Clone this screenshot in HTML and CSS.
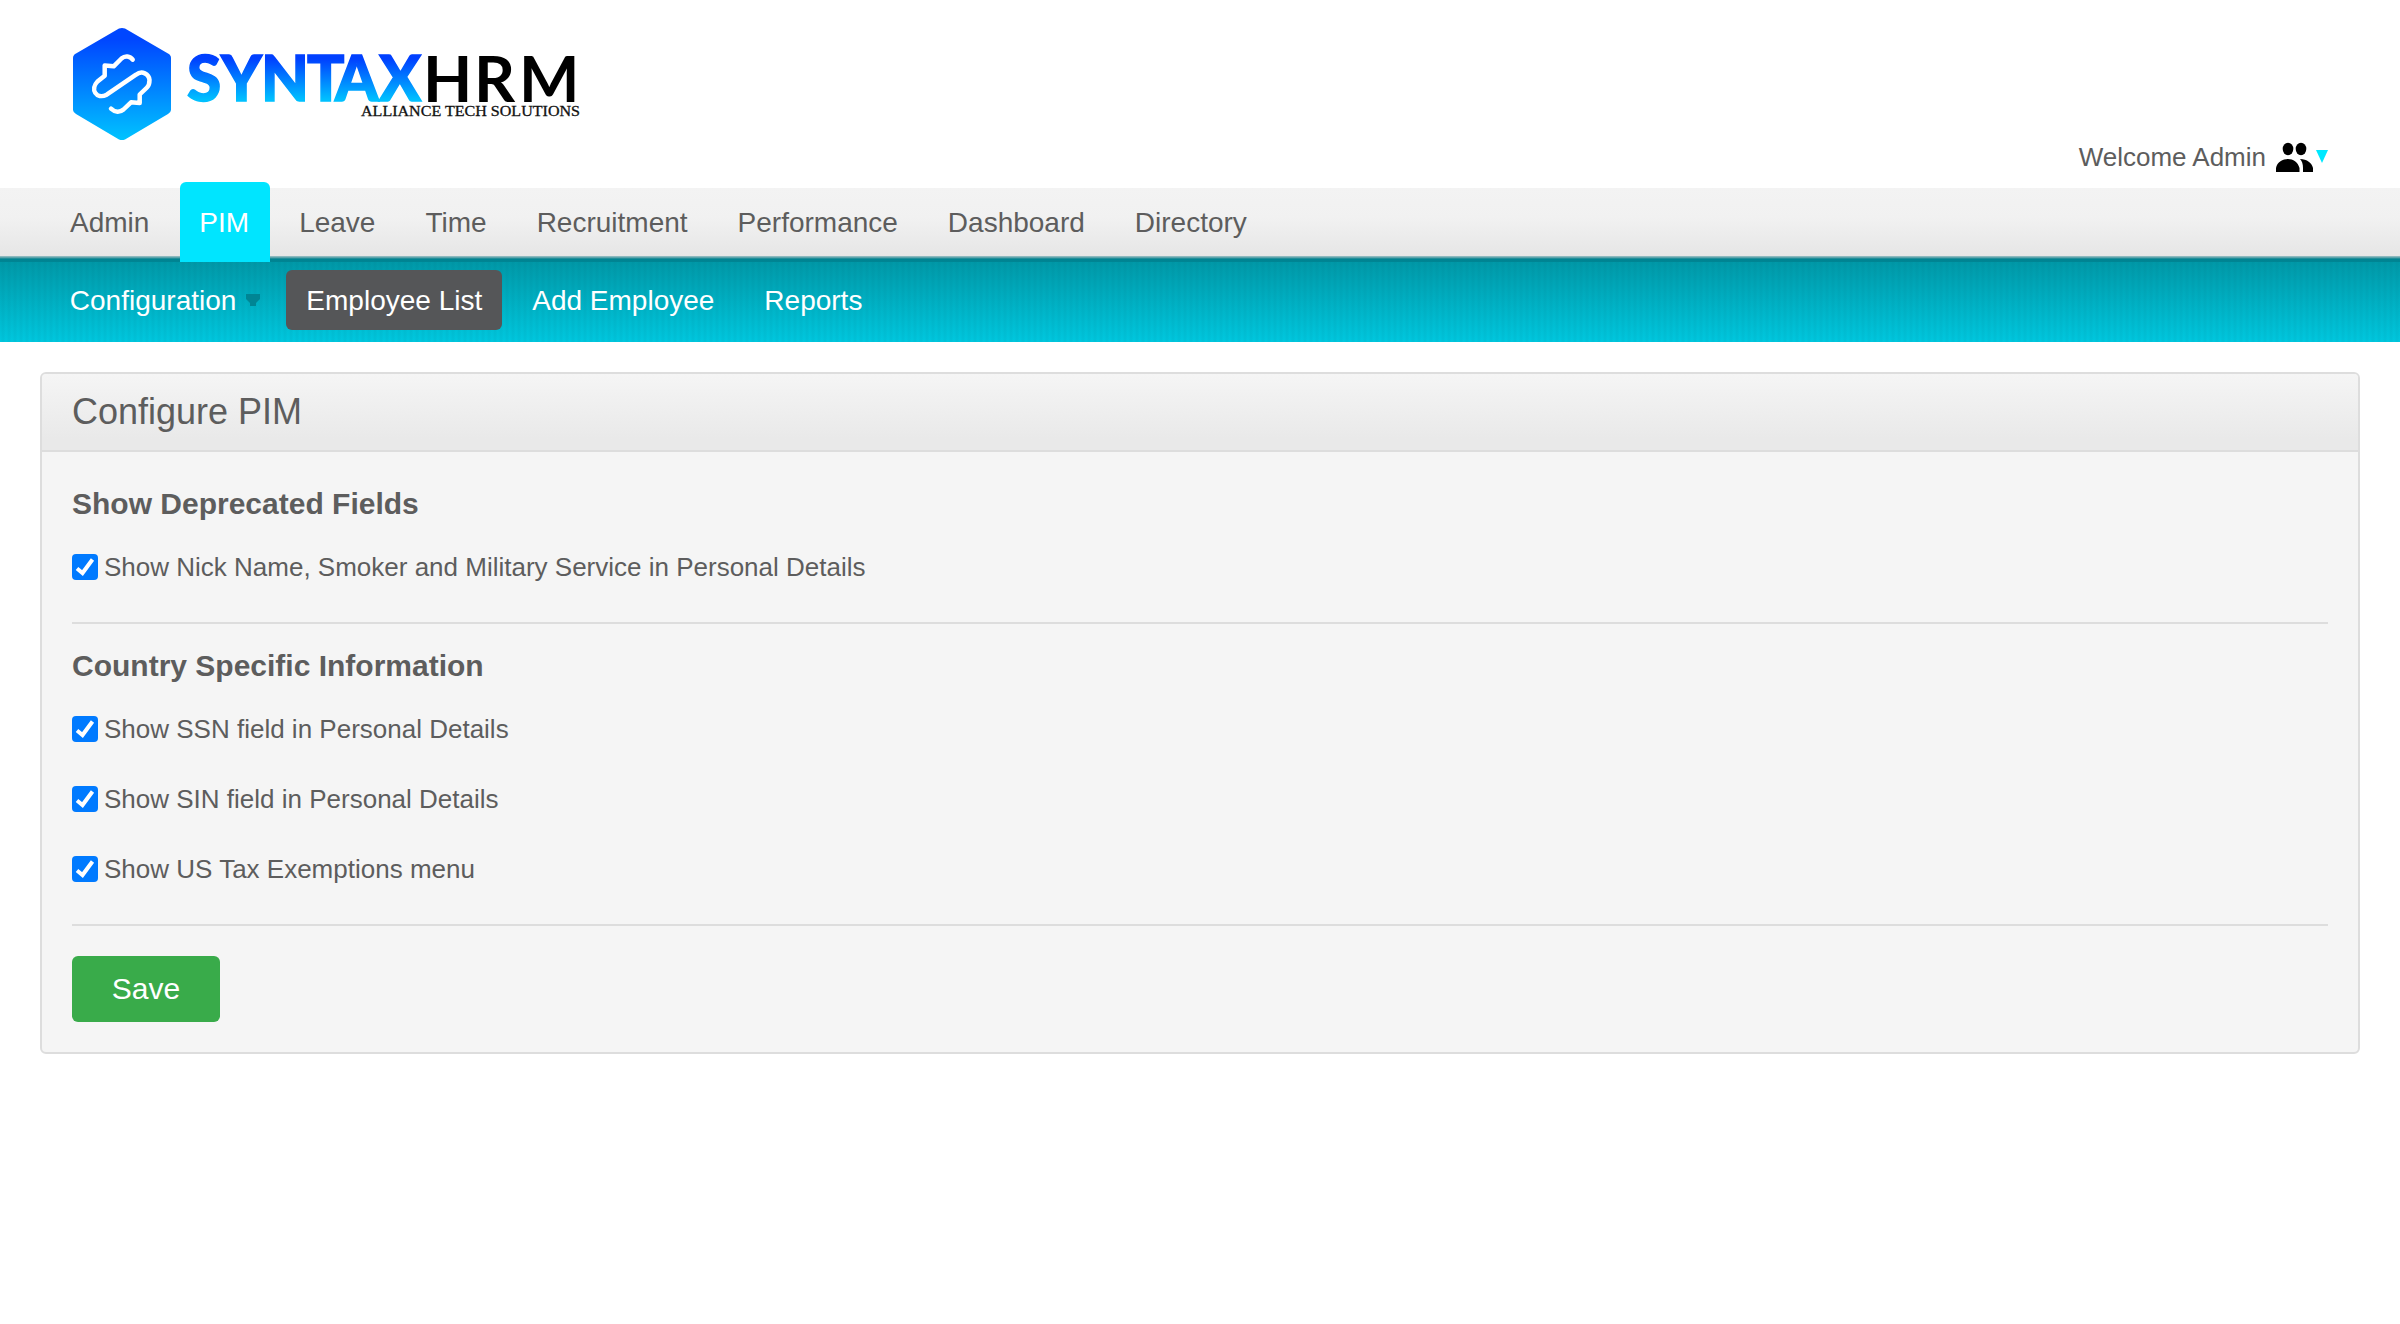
FILE: index.html
```html
<!DOCTYPE html>
<html lang="en">
<head>
<meta charset="utf-8">
<title>Configure PIM</title>
<link rel="stylesheet" href="styles.css">
</head>
<body>
<header class="branding">
  <svg class="logo" width="520" height="130" viewBox="0 0 520 130" role="img" aria-label="SyntaxHRM">
    <defs>
      <linearGradient id="hex" x1="0" y1="0" x2="0" y2="1"><stop offset="0.1" stop-color="#0046ff"/><stop offset="1" stop-color="#00c3ff"/></linearGradient>
      <linearGradient id="word" gradientUnits="userSpaceOnUse" x1="0" y1="45" x2="0" y2="92"><stop offset="0.08" stop-color="#0040ff"/><stop offset="0.95" stop-color="#00c0ff"/></linearGradient>
    </defs>
    <path fill="url(#hex)" d="M49 18.500Q52 17.500 55 18.500L98 43.500Q101 45 101 48V100Q101 102 98 104L55 129.500Q52 130.500 49 129.500L6 104Q3 102 3 100V48Q3 45 6 43.500Z"/>
    <path class="knot" d="M62.700 49.700C60 46 55 45.500 51.500 48.500L43.700 56.300L34.700 55.500V65.700L27.500 71.500C20 79 26 90 36.700 84.700L66 64.700C72 60 79 64 79.500 70C79.500 73 79 75.500 77 77.500L69.700 84.500V93L61 92.300L53.500 99.500C50 102.500 45 102.500 41 98.700"/>
    <text class="syntax" x="117 151 191 237 265 309" y="91">SYNTAX</text>
    <text class="hrm" x="353 404 449" y="92">HRM</text>
    <text class="tagline" x="291" y="106" textLength="219" lengthAdjust="spacingAndGlyphs">ALLIANCE TECH SOLUTIONS</text>
  </svg>
  <div class="account">
    <span>Welcome Admin</span>
    <svg class="people" width="38" height="32" viewBox="0 0 38 32"><ellipse cx="12" cy="7" rx="5.300" ry="6.200"/><ellipse cx="25" cy="7" rx="5.300" ry="6.200"/><path d="M0 30V26C1 20 7 17 12 17S22 20 23.500 26V30ZM24 17C31 17 36 21 37 26V30H27V26C27 22 26 19 24 17Z"/></svg>
    <svg class="caret" width="12" height="14" viewBox="0 0 12 14"><path d="M0 0H12L6 13Z"/></svg>
  </div>
</header>
<nav class="menu">
  <a>Admin</a><a class="current">PIM</a><a>Leave</a><a>Time</a><a>Recruitment</a><a>Performance</a><a>Dashboard</a><a>Directory</a>
</nav>
<nav class="submenu">
  <a class="has-arrow">Configuration<svg width="14" height="13" viewBox="0 0 14 13"><path d="M0 0H14V5L10 9V12H4V9L0 5Z"/></svg></a><a class="selected">Employee List</a><a>Add Employee</a><a>Reports</a>
</nav>
<main class="box">
  <h1>Configure PIM</h1>
  <form class="inner">
    <section>
      <h2>Show Deprecated Fields</h2>
      <label><svg class="check" viewBox="0 0 26 26"><path d="M5 14.500L10.500 19L20.500 5.500"/></svg>Show Nick Name, Smoker and Military Service in Personal Details</label>
    </section>
    <section>
      <h2>Country Specific Information</h2>
      <label><svg class="check" viewBox="0 0 26 26"><path d="M5 14.500L10.500 19L20.500 5.500"/></svg>Show SSN field in Personal Details</label>
      <label><svg class="check" viewBox="0 0 26 26"><path d="M5 14.500L10.500 19L20.500 5.500"/></svg>Show SIN field in Personal Details</label>
      <label><svg class="check" viewBox="0 0 26 26"><path d="M5 14.500L10.500 19L20.500 5.500"/></svg>Show US Tax Exemptions menu</label>
    </section>
    <button type="button">Save</button>
  </form>
</main>
</body>
</html>
```
FILE: styles.css
```css
* { box-sizing: border-box; }
body { margin: 0; background: #fff; color: #5d5d5d; font-family: "Liberation Sans", Arial, sans-serif; font-size: 26px; }
.branding { height: 188px; padding: 0 72px 0 70px; display: flex; justify-content: space-between; }
.logo { display: block; height: 130px; margin-top: 10px; overflow: visible; }
.knot { fill: none; stroke: #fff; stroke-width: 4.5; stroke-linejoin: round; stroke-linecap: round; }
.syntax { font: 900 62px Lato, sans-serif; fill: url(#word); stroke: url(#word); stroke-width: 1.5; }
.hrm { font: 700 64px Lato, sans-serif; fill: #000; }
.tagline { font: 14.5px "Liberation Serif", serif; fill: #111; stroke: #111; stroke-width: .3; }
.account { display: flex; padding-top: 141px; line-height: 32px; }
.people { margin: 1px 2px 0 10px; fill: #000; }
.caret { margin-top: 9px; fill: #00e8ff; }
.menu { display: flex; gap: 10px; height: 74px; padding: 0 50px; background: linear-gradient(#f3f3f3 0, #f1f1f1 30px, #e6e6e6 68px, #a3c3c7 68px, #449aa3 70px, #008290 71px, #008594 74px); }
.menu a { padding: 0 20px; line-height: 70px; font-size: 28px; }
.menu .current { margin: -6px -.9px 0 .65px; height: 80px; padding: 6px 20.9px 0 19.35px; border-radius: 6px 6px 0 0; background: #00e5ff; color: #fff; }
.submenu { display: flex; gap: 10px; height: 80px; padding: 8px 50px 12px 49.8px; background: repeating-linear-gradient(90deg, rgba(0,70,90,.01) 0, rgba(0,70,90,.07) 3px, rgba(0,70,90,.01) 6px), linear-gradient(#009aa9, #00cae1); }
.submenu a { padding: 0 20px; line-height: 61px; font-size: 28px; color: #fff; }
.submenu .has-arrow { padding-right: 16px; }
.has-arrow svg { margin-left: 10px; vertical-align: 3px; fill: #008594; }
.submenu .selected { border-radius: 6px; background: #555658; }
.box { margin: 30px 40px 0; height: 682px; border: 2px solid #ddd; border-radius: 6px; background: #f5f5f5; overflow: hidden; }
h1 { margin: 0; height: 78px; padding-left: 30px; border-bottom: 2px solid #ddd; background: linear-gradient(#f5f5f5, #e9e9e9 85%); font-weight: 400; font-size: 36px; line-height: 75px; }
.inner { padding: 0 30px; }
section { border-bottom: 2px solid #ddd; padding: 25px 0 21px; }
section + section { padding-top: 15px; }
h2 { margin: 0 0 18px; font-size: 30px; line-height: 54px; }
label { display: flex; align-items: center; height: 36px; margin-bottom: 34px; }
label:last-child { margin-bottom: 16px; }
.check { width: 26px; height: 26px; margin-right: 6px; border-radius: 4px; background: #007aff; fill: none; stroke: #fff; stroke-width: 4; }
button { display: block; width: 148px; height: 66px; margin-top: 30px; padding: 0; border: 0; border-radius: 6px; background: #39ab4a; color: #fff; font: 30px "Liberation Sans", Arial, sans-serif; }
```
